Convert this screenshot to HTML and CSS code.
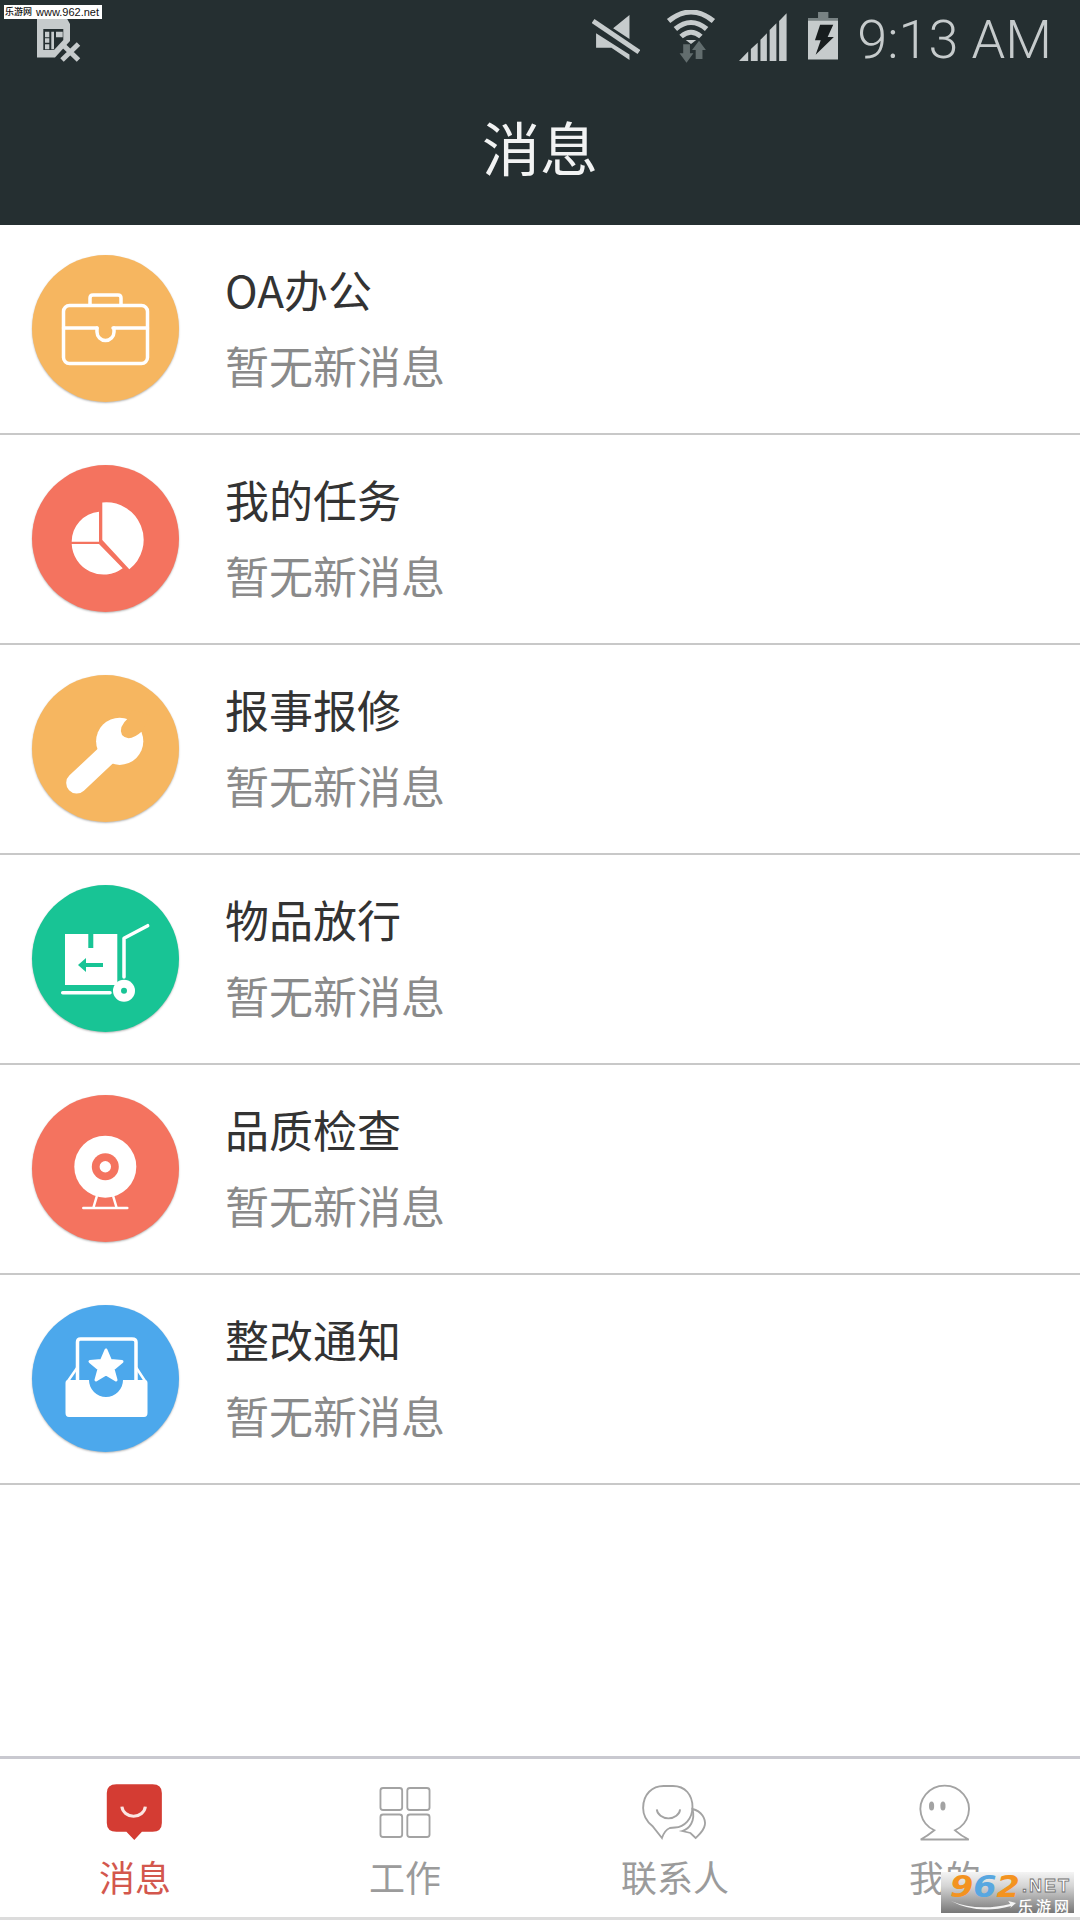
FILE: index.html
```html
<!DOCTYPE html>
<html lang="zh-CN">
<head>
<meta charset="utf-8">
<title>消息</title>
<link rel="stylesheet" href="styles.css">
</head>
<body>
<div class="page">
  <header class="header">
    <div class="status">
      <svg class="sim" width="46" height="48" viewBox="0 0 46 48">
        <path class="sb" d="M2 0H30L35 9V26L20 42.500H2Z"/>
        <path class="hd" d="M8.300 14H28.300V25L19 35H8.300Z"/>
        <path class="sb" d="M10 16.700h4.300v5.600H10ZM10 23.300h4.300v4.400H10ZM10 29.300h4.300v5H10ZM16.300 16.700H19v17.600h-2.700ZM21 16.700h6.700v5.600H21Z"/>
        <path class="sx" d="M27 29L43.500 45M43.500 29L27 45"/>
      </svg>
      <div class="status-right">
        <svg class="st-mute" width="48" height="45" viewBox="0 0 47 45" preserveAspectRatio="none">
          <path class="sb" d="M36.700 0V24L20.700 13.300ZM4 18.300L36.700 39.500V45L19 32.700H4Z"/>
          <path class="sl" d="M1 6L46 37"/>
        </svg>
        <svg class="st-wifi" width="50" height="53" viewBox="0 0 48 53" preserveAspectRatio="none">
          <path class="sa" d="M2.500 11Q24 -7 45.500 11M9 19Q24 6 39 19M14.500 26.500Q24 18 33.500 26.500"/>
          <path class="sb" d="M19 30H29L24 34Z"/>
          <path class="ar" d="M16.500 34.300H23V43.300H26.300L19.700 52.700L13 43.300H16.500ZM31.700 30.700L38.300 40H35V49H28.500V40H25Z"/>
        </svg>
        <svg class="st-signal" width="48" height="48" viewBox="0 0 47 48" preserveAspectRatio="none">
          <path class="sb" d="M0 48L9 38.500V48ZM11.600 36L18.300 29.700V48H11.600ZM21 26.700L27.300 20.300V48H21ZM30 17L36.600 10.300V48H30ZM39.300 8L46.600 .3V48H39.300Z"/>
        </svg>
        <svg class="st-bat" width="30" height="48" viewBox="0 0 29 48" preserveAspectRatio="none">
          <path class="ca" d="M9.700 0H19.700V6H29V8.500H0V6H9.700Z"/>
          <rect class="sb" x="0" y="8.500" width="29" height="39"/>
          <path class="bo" d="M11.700 12.700H24.400L19 25H25L7.400 42.700L12.300 28.300H6.700Z"/>
        </svg>
        <span class="time">9:13 AM</span>
      </div>
    </div>
    <h1 class="title">消息</h1>
  </header>

  <main class="list">
    <div class="row">
      <div class="badge amber">
        <svg width="147" height="147" viewBox="0 0 147 147">
          <g class="wl">
            <rect x="31.500" y="50.500" width="84" height="58" rx="6"/>
            <path d="M58 50V43Q58 40 61 40H86Q89 40 89 43V50M31.500 73H65M81 73H115.500"/>
            <path d="M65 73V77A8.500 8.500 0 0 0 82 77V73"/>
          </g>
        </svg>
      </div>
      <div class="text"><div class="name">OA办公</div><div class="sub">暂无新消息</div></div>
    </div>
    <div class="row">
      <div class="badge coral">
        <svg width="147" height="147" viewBox="0 0 147 147">
          <path class="wf" d="M70.300 37.500A37.500 37.500 0 0 1 97.300 104.300L70.300 75ZM67 46.700V76.700H39.700A30 30 0 0 1 67 46.700ZM39.700 79H67L90.700 103.300A32 32 0 0 1 39.700 79Z"/>
        </svg>
      </div>
      <div class="text"><div class="name">我的任务</div><div class="sub">暂无新消息</div></div>
    </div>
    <div class="row">
      <div class="badge amber">
        <svg width="147" height="147" viewBox="0 0 147 147">
          <path class="wrl" d="M44.700 108L78 76.700"/>
          <circle class="wf" cx="87.700" cy="66.300" r="23.600"/>
          <path class="nt-amber" d="M96.300 43Q86 52 90 60Q97 68 110.700 55.700L118 40L100 35Z"/>
        </svg>
      </div>
      <div class="text"><div class="name">报事报修</div><div class="sub">暂无新消息</div></div>
    </div>
    <div class="row">
      <div class="badge green">
        <svg width="147" height="147" viewBox="0 0 147 147">
          <path class="wf" d="M33 49H56.300V63H61.300V49H85.300V100H33Z"/>
          <path class="ga" d="M71 80H50"/>
          <path class="gh" d="M46 80L54 73V87Z"/>
          <g class="wl">
            <path d="M92 92V53.300L115.700 40.700M30.700 107.700H78"/>
          </g>
          <circle class="wf" cx="92" cy="105.700" r="11"/>
          <circle class="gh" cx="92" cy="105.700" r="3"/>
        </svg>
      </div>
      <div class="text"><div class="name">物品放行</div><div class="sub">暂无新消息</div></div>
    </div>
    <div class="row">
      <div class="badge coral">
        <svg width="147" height="147" viewBox="0 0 147 147">
          <circle class="wf" cx="73.300" cy="71.700" r="31"/>
          <circle class="cc" cx="73.300" cy="71.700" r="13.500"/>
          <circle class="wf" cx="73.300" cy="71.700" r="5.700"/>
          <path class="wl thin" d="M64.700 101.700L61.300 113M81.300 101.700L84.700 113M51.300 113H95.300"/>
        </svg>
      </div>
      <div class="text"><div class="name">品质检查</div><div class="sub">暂无新消息</div></div>
    </div>
    <div class="row">
      <div class="badge sky">
        <svg width="147" height="147" viewBox="0 0 147 147">
          <path class="wl" d="M45.500 76V37Q45.500 34 48.500 34H100Q104 34 104 37V76"/>
          <path class="wl thin" d="M45 63L36 76M104.500 63L113 76"/>
          <path class="wf" d="M36 75H57A17 17 0 0 0 91 75H113Q115.500 75 115.500 78V108Q115.500 112 112 112H37Q33.500 112 33.500 108V78Q33.500 75 36 75Z"/>
          <path class="st" d="M74 45L78.500 55.500L90 56.500L81 64L84 75L74 69L64 75L67 64L58 56.500L69.500 55.500Z"/>
        </svg>
      </div>
      <div class="text"><div class="name">整改通知</div><div class="sub">暂无新消息</div></div>
    </div>
  </main>

  <nav class="tabs">
    <div class="tab on">
      <svg width="62" height="60" viewBox="0 0 60 60" preserveAspectRatio="none">
        <path class="rb" d="M12 3.300H47Q56 3.300 56 12V42Q56 50.700 47 50.700H36.700L29.300 59L21.700 50.700H12Q2.700 50.700 2.700 42V12Q2.700 3.300 12 3.300Z"/>
        <path class="sm" d="M17.300 25.700A11.400 10.500 0 0 0 40 25.700"/>
      </svg>
      <span class="tab-label">消息</span>
    </div>
    <div class="tab">
      <svg width="62" height="60" viewBox="2.250 0 60 60" preserveAspectRatio="none">
        <g class="gl">
          <rect x="8.500" y="7" width="21" height="22" rx="2.500"/>
          <rect x="34.500" y="7" width="21.500" height="22" rx="2.500"/>
          <rect x="8.500" y="33.500" width="21" height="22.500" rx="2.500"/>
          <rect x="34.500" y="33.500" width="21.500" height="22.500" rx="2.500"/>
        </g>
      </svg>
      <span class="tab-label">工作</span>
    </div>
    <div class="tab">
      <svg width="72" height="60" viewBox="1 0 70 60" preserveAspectRatio="none">
        <g class="gl">
          <path d="M23.300 57L14 45C8 40 5 34 5 27C5 13 14 5 25 5H34C46 5 53 14 53 26C53 38 45 46 36 46.500L31 47Q26 49 23.300 57Z"/>
          <path d="M18.300 28.300A11.400 10 0 0 0 41 28.300"/>
          <path d="M53 28C62 30 66 38 65 44C64 50 60 53 56 57L51 52L43 50C50 48 56 40 53 28Z"/>
        </g>
      </svg>
      <span class="tab-label">联系人</span>
    </div>
    <div class="tab">
      <svg width="62" height="60" viewBox="0 0 60 60" preserveAspectRatio="none">
        <path class="gl" d="M19.700 49.300A23.500 23.500 0 1 1 39.700 49.300Q46 55 53 58.500H6.500Q13 55 19.700 49.300Z"/>
        <ellipse class="gd" cx="17" cy="25" rx="2.500" ry="4.500"/>
        <ellipse class="gd" cx="28" cy="25" rx="2.500" ry="4.500"/>
      </svg>
      <span class="tab-label">我的</span>
    </div>
  </nav>

  <div class="mark-top"><span class="mark-top-cn">乐游网</span><span>www.962.net</span></div>
  <div class="mark-bottom">
    <div class="mb-top"><span class="mb-digits"><span class="o">9</span><span class="b">6</span><span class="o">2</span></span><span class="mb-net">.NET</span></div>
    <div class="mb-low">
      <svg width="66" height="12" viewBox="0 0 68 12" preserveAspectRatio="none"><path class="sw" d="M1 1Q28 12 62 4L60 1L68 3L62 8L63 6Q28 15 1 1Z"/></svg>
      <span class="mb-cn">乐游网</span>
    </div>
  </div>
</div>
</body>
</html>
```

FILE: styles.css
```css
* { box-sizing: border-box; }
html, body { margin: 0; padding: 0; background: #fff; }
body { font-family: "Noto Sans CJK SC", "Noto Sans", sans-serif; }
svg { display: block; flex: none; }

.page {
  position: relative;
  width: 1080px;
  height: 1920px;
  display: flex;
  flex-direction: column;
  overflow: hidden;
}

/* header */
.header { height: 225px; background: #252f31; flex: none; }
.status {
  height: 75px;
  padding: 0 28px 0 35px;
  display: flex;
  justify-content: space-between;
}
.sim { margin-top: 15px; }
.status-right { display: flex; align-items: flex-start; }
.st-mute { margin-top: 15px; }
.st-wifi { margin: 10px 0 0 26px; }
.st-signal { margin: 13px 0 0 23px; }
.st-bat { margin: 12px 0 0 21px; }
.time {
  margin-left: 19px;
  font: 300 54px/80px Roboto, sans-serif;
  color: #c6cbcc;
  white-space: nowrap;
}
.title {
  margin: 0;
  height: 150px;
  padding-bottom: 9px;
  display: flex;
  align-items: center;
  justify-content: center;
  font-size: 58px;
  font-weight: 400;
  color: #f2f3f3;
  line-height: 1;
}

.sb { fill: #c6cbcc; }
.hd { fill: #252f31; }
.sx { fill: none; stroke: #c6cbcc; stroke-width: 5; }
.sl { fill: none; stroke: #c6cbcc; stroke-width: 5; }
.sa { fill: none; stroke: #c6cbcc; stroke-width: 5; }
.ar { fill: #626d6e; }
.ca { fill: #788283; }
.bo { fill: #181d1e; }

/* list */
.list { flex: 1; }
.row {
  height: 210px;
  border-bottom: 2px solid #c8c8c8;
  padding: 0 0 2px 32px;
  display: flex;
  align-items: center;
  gap: 46px;
}
.badge {
  width: 147px;
  height: 147px;
  border-radius: 50%;
  flex: none;
  box-shadow: 0 1px 2px rgba(0, 0, 0, .28);
}
.amber { background: #f6b660; }
.coral { background: #f4735f; }
.green { background: #18c495; }
.sky { background: #4ca8ec; }
.text { display: flex; flex-direction: column; padding-bottom: 3px; }
.name { font-size: 44px; line-height: 76px; color: #333; }
.sub { font-size: 44px; line-height: 76px; color: #8a8a8a; }

.wl { fill: none; stroke: #fff; stroke-width: 3.500; stroke-linecap: round; stroke-linejoin: round; }
.thin { stroke-width: 2.500; }
.wf { fill: #fff; }
.wrl { fill: none; stroke: #fff; stroke-width: 21; stroke-linecap: round; }
.nt-amber { fill: #f6b660; }
.ga { fill: none; stroke: #18c495; stroke-width: 4; }
.gh { fill: #18c495; }
.cc { fill: #f4735f; }
.st { fill: #fff; stroke: #fff; stroke-width: 3; stroke-linejoin: round; }

/* tabs */
.tabs {
  flex: none;
  height: 164px;
  border-top: 3px solid #c9c9d0;
  border-bottom: 3px solid #dcdcdc;
  padding-top: 22px;
  display: grid;
  grid-template-columns: repeat(4, 1fr);
  background: #fff;
}
.tab {
  display: flex;
  flex-direction: column;
  align-items: center;
  color: #9b9b9b;
}
.tab.on { color: #d3574d; }
.tab-label { font-size: 36px; line-height: 50px; margin-top: 10px; }
.rb { fill: #d43c33; }
.sm { fill: none; stroke: #fbe6e2; stroke-width: 3; }
.gl { fill: none; stroke: #a3a3a3; stroke-width: 1.800; }
.gd { fill: #a3a3a3; }

/* watermarks */
.mark-top {
  position: absolute;
  left: 4px;
  top: 5px;
  width: 98px;
  height: 14px;
  background: #fff;
  color: #111;
  font: 11px/14px "Liberation Sans", sans-serif;
  white-space: nowrap;
  padding-left: 1px;
  display: flex;
  gap: 4px;
}
.mark-top-cn { font: 500 9px/14px "Noto Sans CJK SC", sans-serif; }
.mark-bottom {
  position: absolute;
  left: 941px;
  top: 1872px;
  width: 133px;
  height: 41px;
  background: linear-gradient(180deg, #f4f4f4 0%, #d4d4d4 35%, #777 100%);
  display: flex;
  flex-direction: column;
  padding: 3px 0 0 9px;
}
.mb-top { display: flex; align-items: center; height: 23px; white-space: nowrap; }
.mb-digits {
  display: inline-block;
  width: 71px;
  font: italic 700 31px/23px "DejaVu Sans", sans-serif;
  transform: scaleX(1.08);
  transform-origin: left center;
}
.o { color: #f39320; }
.b { color: #58a7e0; }
.mb-net {
  font: 700 18px/23px "Liberation Sans", sans-serif;
  color: #fff;
  letter-spacing: 2px;
  margin-left: 1px;
  -webkit-text-stroke: .8px #6e6e6e;
}
.mb-low { display: flex; align-items: center; height: 15px; }
.sw { fill: #f4f4f4; }
.mb-cn { font-size: 15px; font-weight: 500; line-height: 15px; color: #fff; letter-spacing: 3px; margin-left: 2px; }
```
